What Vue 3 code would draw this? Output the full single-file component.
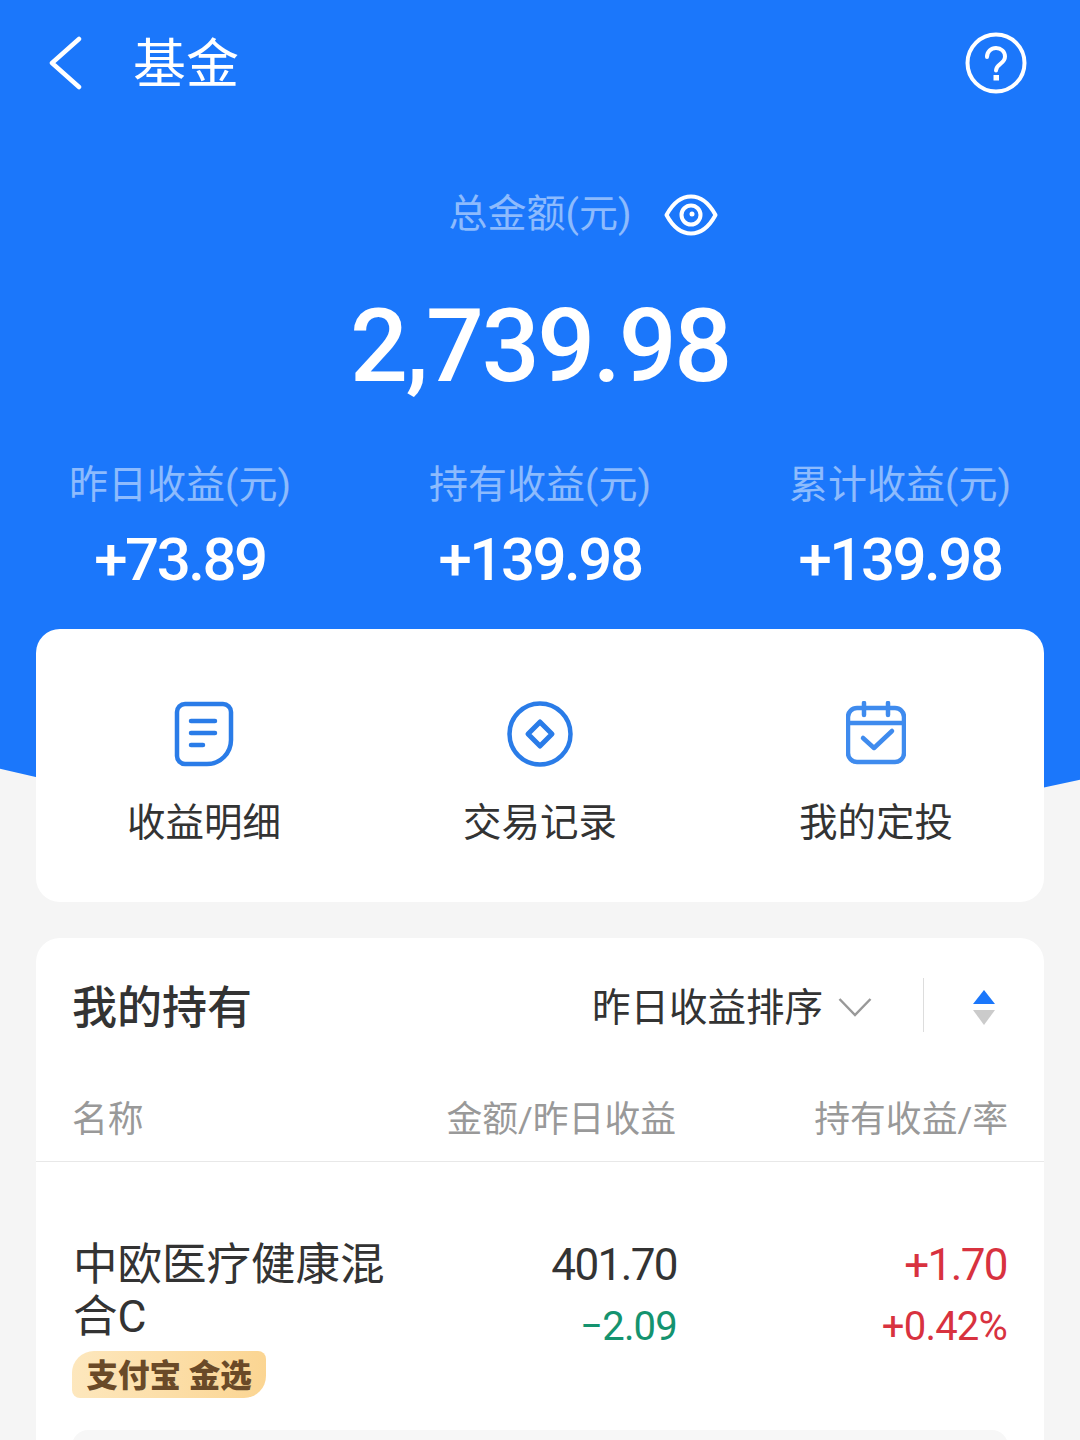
<script setup>
const stats = [
  { label: '昨日收益(元)', value: '+73.89' },
  { label: '持有收益(元)', value: '+139.98' },
  { label: '累计收益(元)', value: '+139.98' }
]
</script>

<template>
  <div class="page">
    <section class="hero">
      <header class="nav">
        <svg class="back" width="36" height="56" viewBox="0 0 36 56" fill="none">
          <path d="M30 4 L3 28 L30 52" stroke="#fff" stroke-width="4.500" stroke-linecap="round" stroke-linejoin="round" />
        </svg>
        <h1 class="title">基金</h1>
        <svg class="help" width="62" height="62" viewBox="0 0 62 62" fill="none">
          <circle cx="31" cy="31" r="28.5" stroke="#fff" stroke-width="4" />
          <path d="M22 25c0-5.500 4-9 9-9s9 3.500 9 8.500c0 3.800-2.200 5.600-4.600 7.300-2.500 1.800-4.400 3.200-4.400 6.700" stroke="#fff" stroke-width="4" stroke-linecap="round" />
          <rect x="28.500" y="43" width="5.500" height="5.500" fill="#fff" />
        </svg>
      </header>
      <div class="total-label">
        <span>总金额(元)</span>
        <svg class="eye" width="54" height="44" viewBox="0 0 54 44" fill="none">
          <path d="M2.500 22C9 10 17 3.500 27 3.500S45 10 51.500 22C45 34 37 40.500 27 40.500S9 34 2.500 22Z" stroke="#fff" stroke-width="4" stroke-linejoin="round" />
          <circle cx="27" cy="22" r="9.500" stroke="#fff" stroke-width="4" />
          <circle cx="28" cy="21" r="2.500" fill="#fff" />
        </svg>
      </div>
      <div class="total">2,739.98</div>
      <div class="stats">
        <div v-for="s in stats" :key="s.label" class="stat">
          <div class="stat-label">{{ s.label }}</div>
          <div class="stat-value">{{ s.value }}</div>
        </div>
      </div>
    </section>

    <main class="content">
      <section class="card actions">
        <div class="action">
          <svg width="60" height="66" viewBox="0 0 60 66" fill="none" stroke="#2a7ce8" stroke-width="4.500" stroke-linecap="round" stroke-linejoin="round">
            <path d="M11 3h38a8 8 0 0 1 8 8v28a24 24 0 0 1-24 24H11a8 8 0 0 1-8-8V11a8 8 0 0 1 8-8Z" />
            <path d="M17 20h24M17 32h24M17 44h12" />
          </svg>
          <span>收益明细</span>
        </div>
        <div class="action">
          <svg width="66" height="66" viewBox="0 0 66 66" fill="none" stroke="#2a7ce8" stroke-width="4.500" stroke-linejoin="round">
            <circle cx="33" cy="33" r="30.500" />
            <path d="M33 21 45 33 33 45 21 33Z" stroke-width="5" />
          </svg>
          <span>交易记录</span>
        </div>
        <div class="action">
          <svg width="60" height="66" viewBox="0 0 60 66" fill="none" stroke="#3f8bee" stroke-width="4.500" stroke-linecap="round" stroke-linejoin="round">
            <rect x="2" y="7" width="56" height="54" rx="9" />
            <path d="M2 22h56M18 2v12M42 2v12" />
            <path d="M17 37l11 10 18-17" />
          </svg>
          <span>我的定投</span>
        </div>
      </section>

      <section class="card holdings">
        <div class="head">
          <h2>我的持有</h2>
          <div class="sort">
            <span class="sort-text">昨日收益排序</span>
            <svg class="chev" width="34" height="20" viewBox="0 0 34 20" fill="none">
              <path d="M1.500 2 17 18 32.500 2" stroke="#999" stroke-width="2.500" />
            </svg>
            <i class="divider"></i>
            <svg class="updown" width="22" height="36" viewBox="0 0 22 36">
              <path d="M11 0 22 14H0Z" fill="#1b77fb" />
              <path d="M0 20H22L11 35Z" fill="#cbcbcb" />
            </svg>
          </div>
        </div>
        <div class="cols">
          <span class="col-a">名称</span>
          <span class="col-b">金额/昨日收益</span>
          <span class="col-c">持有收益/率</span>
        </div>
        <div class="row">
          <div class="col-a">
            <div class="name">中欧医疗健康混合C</div>
            <div class="tag">支付宝 金选</div>
          </div>
          <div class="col-b">
            <div class="big">401.70</div>
            <div class="small green">−2.09</div>
          </div>
          <div class="col-c">
            <div class="big red">+1.70</div>
            <div class="small red">+0.42%</div>
          </div>
        </div>
        <div class="note"></div>
      </section>
    </main>
  </div>
</template>

<style>
html, body { margin: 0; background: #f5f5f5; }
</style>

<style scoped>
.page {
  width: 1080px;
  height: 1440px;
  overflow: hidden;
  background: #f5f5f5;
  font-family: Roboto, "Noto Sans CJK SC", sans-serif;
}
.hero {
  height: 840px;
  box-sizing: border-box;
  background: #1b77fb;
  color: #fff;
  clip-path: circle(2400px at 564px -1564px);
}
.nav {
  display: flex;
  align-items: center;
  height: 126px;
  padding: 0 53px 0 49px;
}
.back { flex: none; }
.title {
  margin: 4px 0 0 48px;
  flex: 1;
  font-size: 53px;
  font-weight: 400;
  line-height: 60px;
}
.total-label {
  position: relative;
  margin-top: 60px;
  height: 56px;
  text-align: center;
  font-size: 39px;
  line-height: 56px;
  color: rgba(255, 255, 255, .5);
}
.eye {
  position: absolute;
  left: 664px;
  top: 7px;
}
.total {
  margin-top: 44px;
  text-align: center;
  font-size: 102px;
  font-weight: 500;
  letter-spacing: -2.400px;
  line-height: 120px;
}
.stats {
  display: grid;
  grid-template-columns: repeat(3, 360px);
  margin-top: 51px;
}
.stat { text-align: center; }
.stat-label {
  font-size: 39px;
  line-height: 56px;
  color: rgba(255, 255, 255, .5);
}
.stat-value {
  margin-top: 14px;
  font-size: 60px;
  font-weight: 500;
  letter-spacing: -2.500px;
  line-height: 66px;
}
.content {
  position: relative;
  margin-top: -211px;
  padding: 0 36px;
}
.card {
  background: #fff;
  border-radius: 24px;
}
.actions {
  display: grid;
  grid-template-columns: repeat(3, 1fr);
  height: 273px;
  box-sizing: border-box;
  padding-top: 72px;
}
.action {
  display: flex;
  flex-direction: column;
  align-items: center;
  gap: 28px;
  font-size: 38.500px;
  line-height: 56px;
  color: #333;
}
.holdings {
  margin-top: 36px;
  height: 700px;
}
.head {
  display: flex;
  align-items: center;
  justify-content: space-between;
  height: 134px;
  padding: 0 37px 0 36px;
}
h2 {
  margin: 0 0 2px;
  font-size: 45px;
  font-weight: 500;
  color: #333;
}
.sort {
  display: flex;
  align-items: center;
  font-size: 38.500px;
  color: #333;
}
.sort-text { line-height: 54px; margin-top: 6px; }
.chev { margin: 4px 0 0 15px; }
.divider {
  width: 1px;
  height: 54px;
  margin: 0 49px 0 51px;
  background: #ddd;
}
.updown { margin: 6px 12px 0 0; }
.cols {
  display: grid;
  grid-template-columns: 340px 264px 1fr;
  align-items: center;
  height: 88px;
  padding: 0 36px 1px 36px;
  border-bottom: 1px solid #e8e8e8;
  font-size: 35.800px;
  color: #999;
}
.col-b, .col-c { text-align: right; }
.row {
  display: grid;
  grid-template-columns: 340px 264px 1fr;
  padding: 77px 37px 0 37px;
}
.name {
  width: 320px;
  font-size: 44.500px;
  line-height: 52px;
  color: #333;
}
.tag {
  display: inline-block;
  margin: 8px 0 0 -1px;
  padding: 0 14.500px;
  height: 47px;
  line-height: 51px;
  font-size: 31.500px;
  font-weight: 900;
  color: #6a4a28;
  background: linear-gradient(90deg, #fde7bd, #fbd592);
  border-radius: 22px 8px 22px 8px;
}
.big {
  font-size: 44px;
  letter-spacing: -1.600px;
  line-height: 52px;
  color: #333;
}
.small {
  margin-top: 10px;
  font-size: 40px;
  letter-spacing: -.800px;
  line-height: 52px;
}
.red { color: #d8323f; }
.green { color: #14936f; }
.note {
  margin: 32px 36px 0;
  height: 80px;
  background: #f7f7f7;
  border-radius: 16px;
}
</style>
